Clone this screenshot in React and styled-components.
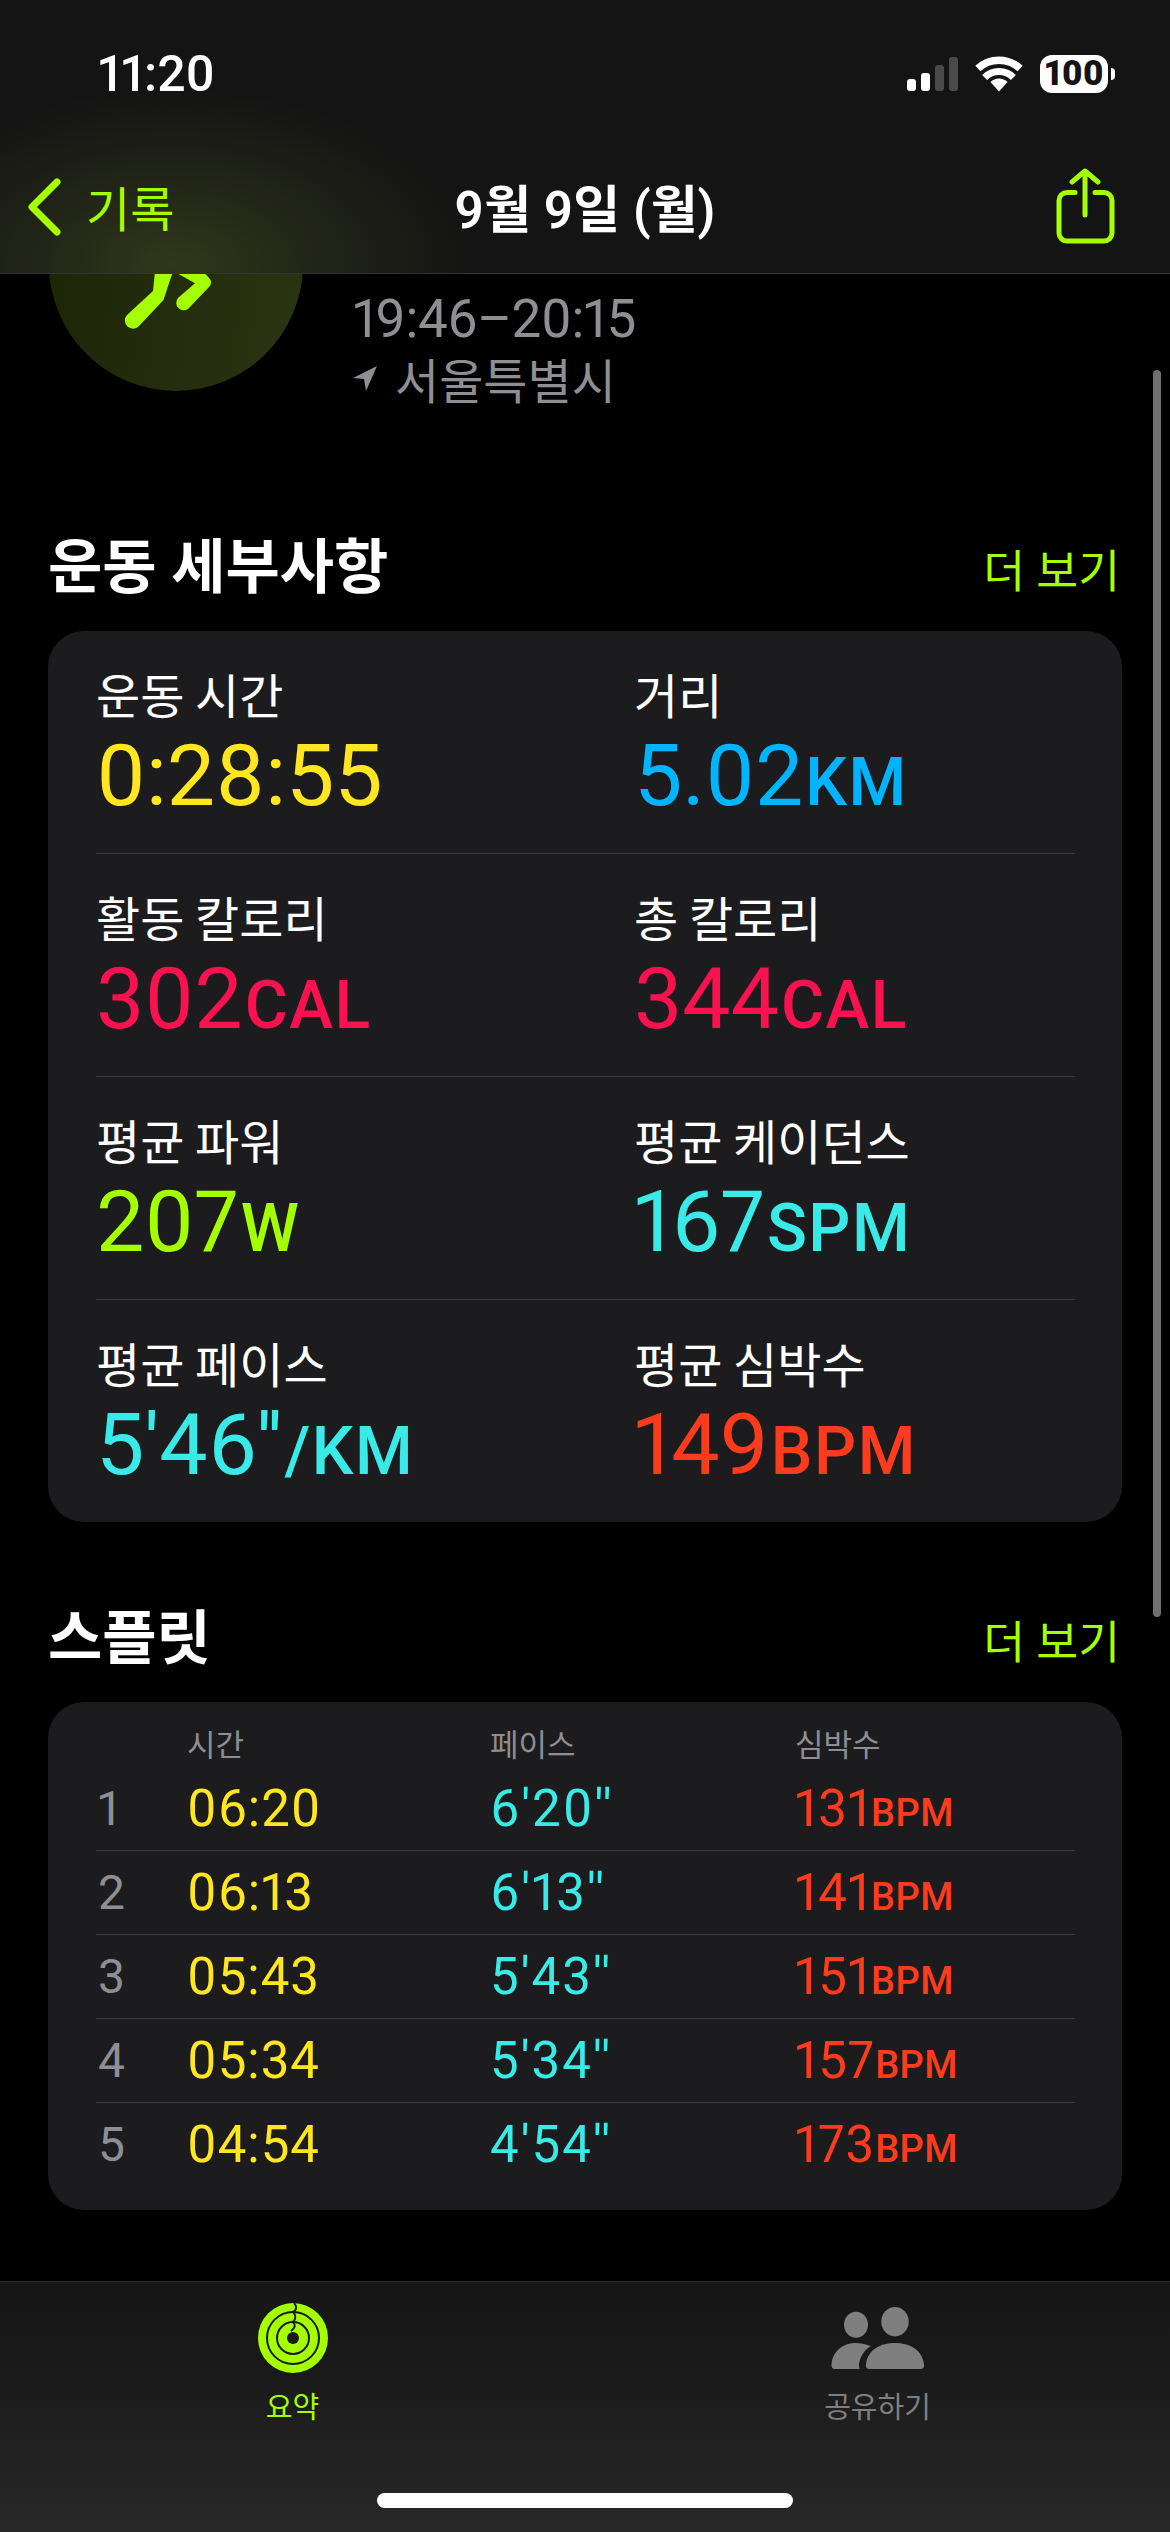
import styled, { createGlobalStyle } from "styled-components";

const LIME = "#a4ff00";
const YELLOW = "#ffe620";
const BLUE = "#00b4ff";
const PINK = "#fa114f";
const CYAN = "#3aeae6";
const RED = "#ff3b1e";
const GREY = "#8e8e93";
const LINE = "#3a3a3c";
const HANGUL = `"Noto Sans CJK KR", Roboto, sans-serif`;

const GlobalStyle = createGlobalStyle`
  html, body {
    margin: 0;
    padding: 0;
    background: #000;
  }
  body {
    font-family: Roboto, "Noto Sans CJK KR", sans-serif;
    font-variant-numeric: proportional-nums;
    color: #fff;
  }
`;

const Page = styled.div`
  position: relative;
  width: 1170px;
  height: 2532px;
  display: flex;
  flex-direction: column;
  overflow: hidden;
  background: #000;
`;

const Header = styled.header`
  flex: none;
  height: 273px;
  border-bottom: 1px solid #33352f;
  background:
    radial-gradient(ellipse 300px 175px at 174px 264px, #30381a 0%, rgba(44, 50, 26, 0.6) 45%, rgba(40, 44, 26, 0) 100%),
    #141414;
`;

const StatusBar = styled.div`
  height: 148px;
  padding: 0 62px 0 98px;
  display: flex;
  align-items: center;
  justify-content: space-between;
`;

const Clock = styled.span`
  font-size: 50px;
  font-weight: 500;
`;

const StatusIcons = styled.div`
  display: flex;
  align-items: center;
  gap: 17px;
`;

const Signal = styled.div`
  height: 34px;
  display: flex;
  align-items: flex-end;
  gap: 5px;
`;

const SignalBar = styled.i`
  display: block;
  width: 9px;
  height: ${(p) => p.$h}px;
  border-radius: 3px;
  background: ${(p) => (p.$on ? "#fff" : "#4a4a4a")};
`;

const Battery = styled.div`
  position: relative;
  width: 68px;
  height: 38px;
  border-radius: 12px;
  background: #fff;
  color: #141414;
  font-size: 35px;
  font-weight: 900;
  line-height: 38px;
  text-align: center;

  &::after {
    content: "";
    position: absolute;
    left: 71px;
    top: 13px;
    width: 4px;
    height: 12px;
    border-radius: 0 6px 6px 0;
    background: #fff;
  }
`;

const NavBar = styled.nav`
  height: 116px;
  padding: 0 24px;
  display: grid;
  grid-template-columns: 1fr auto 1fr;
  align-items: center;
`;

const BackLink = styled.div`
  display: flex;
  align-items: center;
  gap: 22px;
  color: ${LIME};
  font-size: 48px;
`;

const NavTitle = styled.h1`
  margin: 0;
  font-size: 51px;
  font-weight: 600;
`;

const ShareButton = styled.div`
  justify-self: end;
  margin-right: 31px;
  height: 76px;
`;

const Content = styled.main`
  flex: 1;
  overflow: hidden;
`;

const Hero = styled.section`
  margin-top: -137px;
  padding-left: 49px;
  display: flex;
  align-items: flex-start;
  gap: 50px;
`;

const WorkoutBadge = styled.div`
  position: relative;
  flex: none;
  width: 254px;
  height: 254px;
  border-radius: 50%;
  background: linear-gradient(100deg, #1b2506, #2b3514);
`;

const RunnerIcon = styled.svg`
  position: absolute;
  inset: 0;
`;

const HeroText = styled.div`
  padding-top: 152px;
  color: ${GREY};
`;

const HeroTime = styled.div`
  font-size: 53px;
  line-height: 60px;
  letter-spacing: -0.4px;
`;

const HeroPlace = styled.div`
  height: 62px;
  display: flex;
  align-items: center;
  gap: 18px;
  padding-bottom: 4px;
  box-sizing: border-box;
  font-family: ${HANGUL};
  font-size: 48px;
  line-height: 58px;
`;

const SectionHead = styled.div`
  height: 80px;
  margin: ${(p) => p.$top}px 48px 26px;
  display: flex;
  align-items: center;
  justify-content: space-between;
`;

const SectionTitle = styled.h2`
  margin: 0 0 6px;
  font-size: 59px;
  font-weight: 700;
`;

const MoreLink = styled.span`
  margin: 6px 2px 0 0;
  color: ${LIME};
  font-size: 45.5px;
`;

const Card = styled.div`
  margin: 0 48px;
  padding: 0 47px 0 48px;
  border-radius: 36px;
  background: #1c1c1e;
`;

const MetricRow = styled.div`
  display: grid;
  grid-template-columns: 538px 1fr;
  padding: 33px 0 25px;
  border-bottom: 1px solid ${LINE};

  &:last-child {
    border-bottom: 0;
    padding-bottom: 25px;
  }
`;

const MetricLabel = styled.div`
  height: 60px;
  font-family: ${HANGUL};
  font-size: 48px;
  line-height: 58px;
`;

const MetricValue = styled.div`
  height: 104px;
  color: ${(p) => p.$color};
  font-size: 86px;
  line-height: 104px;
`;

const MetricUnit = styled.span`
  margin-left: 2px;
  font-size: 66px;
  font-weight: 500;
  letter-spacing: 1.5px;
  line-height: 1;
`;

const SplitGrid = styled.div`
  padding: 16px 0 24px;
`;

const SplitRow = styled.div`
  display: grid;
  grid-template-columns: 91px 303px 305px 1fr;
  align-items: center;
  height: ${(p) => (p.$head ? 49 : 83)}px;
  border-bottom: ${(p) => (p.$line ? `1px solid ${LINE}` : "0")};
`;

const SplitHead = styled.span`
  color: ${GREY};
  font-size: 31px;
`;

const SplitRank = styled.span`
  color: ${GREY};
  font-size: 48px;
  margin-left: 2px;
`;

const SplitValue = styled.span`
  color: ${(p) => p.$color};
  font-size: 51px;
  letter-spacing: ${(p) => p.$spread || 1}px;
`;

const SplitUnit = styled.span`
  font-size: 38px;
  font-weight: 500;
  letter-spacing: 0.5px;
`;

const TabBar = styled.footer`
  flex: none;
  height: 250px;
  display: flex;
  flex-direction: column;
  align-items: center;
  border-top: 1px solid #2f2f2f;
  background: linear-gradient(180deg, #161616, #1a1a1a 35%, #282828);
`;

const Tabs = styled.div`
  width: 100%;
  flex: 1;
  padding-top: 21px;
  display: grid;
  grid-template-columns: 1fr 1fr;
`;

const Tab = styled.div`
  display: flex;
  flex-direction: column;
  align-items: center;
  color: ${(p) => (p.$active ? LIME : "#7f7f7f")};
`;

const TabIcon = styled.div`
  height: 70px;
  display: flex;
  align-items: center;
`;

const TabLabel = styled.span`
  margin-top: 16px;
  font-size: 29px;
  line-height: 38px;
`;

const HomeIndicator = styled.div`
  width: 416px;
  height: 15px;
  margin-bottom: 24px;
  border-radius: 8px;
  background: #fff;
`;

const ScrollThumb = styled.div`
  position: absolute;
  left: 1153px;
  top: 370px;
  width: 8px;
  height: 1247px;
  border-radius: 4px;
  background: #6f6f6f;
`;

const metrics = [
  [
    { label: "운동 시간", value: "0:28:55", color: YELLOW },
    { label: "거리", value: "5.02", unit: "KM", color: BLUE },
  ],
  [
    { label: "활동 칼로리", value: "302", unit: "CAL", color: PINK },
    { label: "총 칼로리", value: "344", unit: "CAL", color: PINK },
  ],
  [
    { label: "평균 파워", value: "207", unit: "W", color: LIME },
    { label: "평균 케이던스", value: "167", unit: "SPM", color: CYAN },
  ],
  [
    { label: "평균 페이스", value: "5'46''", unit: "/KM", color: CYAN },
    { label: "평균 심박수", value: "149", unit: "BPM", color: RED },
  ],
];

const splits = [
  { time: "06:20", pace: "6'20''", bpm: "131" },
  { time: "06:13", pace: "6'13''", bpm: "141" },
  { time: "05:43", pace: "5'43''", bpm: "151" },
  { time: "05:34", pace: "5'34''", bpm: "157" },
  { time: "04:54", pace: "4'54''", bpm: "173" },
];

function WifiIcon() {
  return (
    <svg width="48" height="36" viewBox="0 0 48 36">
      <path d="M24 35.5L15.5 26A12 12 0 0 1 32.5 26Z" fill="#fff" />
      <path d="M9.6 21.5A20.3 20.3 0 0 1 38.4 21.5" fill="none" stroke="#fff" strokeWidth="7" />
      <path d="M2.9 12.5A31 31 0 0 1 45.1 12.5" fill="none" stroke="#fff" strokeWidth="7.5" />
    </svg>
  );
}

function ShareIcon() {
  return (
    <svg width="60" height="76" viewBox="0 0 60 76" fill="none" stroke={LIME} strokeWidth="5" strokeLinecap="round" strokeLinejoin="round">
      <path d="M20 24.5H12a8 8 0 0 0-8 8V65a8 8 0 0 0 8 8H49a8 8 0 0 0 8-8V32.5a8 8 0 0 0-8-8H40" />
      <path d="M30 3V47M17 14L30 3L43 14" />
    </svg>
  );
}

function RingsIcon() {
  return (
    <svg width="70" height="70" viewBox="0 0 70 70">
      <circle cx="35" cy="35" r="35" fill={LIME} />
      <g fill="none" stroke="#1a1a1a" strokeWidth="2">
        <circle cx="35" cy="35" r="26" />
        <circle cx="35" cy="35" r="16" />
        <path d="M36 0C39 3 39 7 35 9C38 12 38 16 35 19C38 22 37 25 33 28" />
      </g>
      <circle cx="35" cy="35" r="6" fill="#1a1a1a" />
    </svg>
  );
}

function PeopleIcon() {
  return (
    <svg width="94" height="62" viewBox="0 0 94 62" fill="#7f7f7f">
      <ellipse cx="25" cy="17.7" rx="12" ry="13" />
      <ellipse cx="64" cy="14.7" rx="13.7" ry="14.7" />
      <path d="M39 62Q34 62 35 57C37 42 50 36 64 36C78 36 91 42 93 57Q94 62 89 62Z" />
      <path d="M4 62Q0 62 .5 57C2 43 13 36 25 36C29 36 34 37 40 39C33 43 29 50 28 57Q28 62 29 62Z" />
    </svg>
  );
}

function App() {
  return (
    <Page>
      <GlobalStyle />
      <Header>
        <StatusBar>
          <Clock>11:20</Clock>
          <StatusIcons>
            <Signal>
              <SignalBar $h={12} $on />
              <SignalBar $h={18} $on />
              <SignalBar $h={26} />
              <SignalBar $h={34} />
            </Signal>
            <WifiIcon />
            <Battery>100</Battery>
          </StatusIcons>
        </StatusBar>
        <NavBar>
          <BackLink>
            <svg width="40" height="64" viewBox="0 0 40 64" fill="none" stroke={LIME} strokeWidth="7" strokeLinecap="round" strokeLinejoin="round">
              <path d="M33 8L8 33L33 58" />
            </svg>
            기록
          </BackLink>
          <NavTitle>9월 9일 (월)</NavTitle>
          <ShareButton>
            <ShareIcon />
          </ShareButton>
        </NavBar>
      </Header>

      <Content>
        <Hero>
          <WorkoutBadge>
            <RunnerIcon viewBox="0 0 254 254" width="254" height="254" fill={LIME}>
              <path d="M107 125L127 125L114.500 163L90 189A8 8 0 0 1 78 178L104 154Z" />
              <path d="M127.700 136L146 146.300L129 161A7.500 7.500 0 0 0 139 172L160 150A6 6 0 0 0 160 141L150 130L127 130Z" />
            </RunnerIcon>
          </WorkoutBadge>
          <HeroText>
            <HeroTime>19:46–20:15</HeroTime>
            <HeroPlace>
              <svg width="24" height="25" viewBox="0 0 24 25" fill={GREY}>
                <path d="M24 0L0 12L11 13L13 25Z" />
              </svg>
              서울특별시
            </HeroPlace>
          </HeroText>
        </Hero>

        <SectionHead $top={114}>
          <SectionTitle>운동 세부사항</SectionTitle>
          <MoreLink>더 보기</MoreLink>
        </SectionHead>
        <Card>
          {metrics.map((row) => (
            <MetricRow key={row[0].label}>
              {row.map((m) => (
                <div key={m.label}>
                  <MetricLabel>{m.label}</MetricLabel>
                  <MetricValue $color={m.color}>
                    {m.value}
                    {m.unit && <MetricUnit>{m.unit}</MetricUnit>}
                  </MetricValue>
                </div>
              ))}
            </MetricRow>
          ))}
        </Card>

        <SectionHead $top={74}>
          <SectionTitle>스플릿</SectionTitle>
          <MoreLink>더 보기</MoreLink>
        </SectionHead>
        <Card>
          <SplitGrid>
            <SplitRow $head>
              <span />
              <SplitHead>시간</SplitHead>
              <SplitHead>페이스</SplitHead>
              <SplitHead>심박수</SplitHead>
            </SplitRow>
            {splits.map((s, i) => (
              <SplitRow key={s.time} $line={i < splits.length - 1}>
                <SplitRank>{i + 1}</SplitRank>
                <SplitValue $color={YELLOW}>{s.time}</SplitValue>
                <SplitValue $color={CYAN} $spread={2}>{s.pace}</SplitValue>
                <SplitValue $color={RED}>
                  {s.bpm}
                  <SplitUnit>BPM</SplitUnit>
                </SplitValue>
              </SplitRow>
            ))}
          </SplitGrid>
        </Card>
      </Content>

      <TabBar>
        <Tabs>
          <Tab $active>
            <TabIcon>
              <RingsIcon />
            </TabIcon>
            <TabLabel>요약</TabLabel>
          </Tab>
          <Tab>
            <TabIcon>
              <PeopleIcon />
            </TabIcon>
            <TabLabel>공유하기</TabLabel>
          </Tab>
        </Tabs>
        <HomeIndicator />
      </TabBar>

      <ScrollThumb />
    </Page>
  );
}

export default App;
